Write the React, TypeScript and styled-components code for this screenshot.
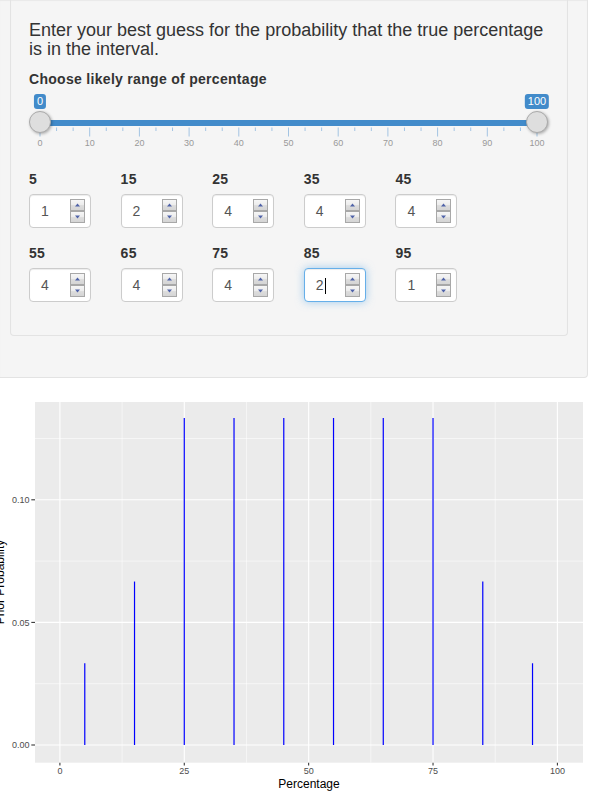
import { FC, useId } from "react";
import styled, { createGlobalStyle } from "styled-components";

const GlobalStyle = createGlobalStyle`
  html, body {
    margin: 0;
    padding: 0;
    background: #fff;
  }
  body {
    width: 596px;
    overflow: hidden;
    font-family: "Liberation Sans", Arial, Helvetica, sans-serif;
    font-size: 14px;
    line-height: 1.42857;
    color: #333;
  }
`;

const OuterWell = styled.div`
  box-sizing: border-box;
  width: 588px;
  padding: 0 19px 41px 10px;
  background: #f5f5f5;
  border-right: 1px solid #e3e3e3;
  border-bottom: 1px solid #e3e3e3;
  border-radius: 0 0 4px 0;
  box-shadow: inset 0 1px 1px rgba(0, 0, 0, 0.05);
`;

const InnerWell = styled.div`
  box-sizing: border-box;
  width: 558px;
  padding: 21px 18px 33px;
  background: #f5f5f5;
  border: 1px solid #e3e3e3;
  border-top: none;
  border-radius: 0 0 4px 4px;
  box-shadow: inset 0 1px 1px rgba(0, 0, 0, 0.05);
`;

const Title = styled.h4`
  margin: 0 0 10px;
  font-size: 18px;
  font-weight: 400;
  line-height: 19px;
  color: #333;
`;

const ControlLabel = styled.label`
  display: block;
  margin-bottom: 5px;
  font-weight: 700;
  font-size: 14px;
  line-height: 20px;
  letter-spacing: 0.3px;
`;

const SliderWrap = styled.div`
  position: relative;
  box-sizing: border-box;
  height: 75px;
  padding-top: 26px;
`;

const Bar = styled.div`
  margin: 0 11px;
  height: 6px;
  background: #428bca;
`;

const Badge = styled.span<{ $at: number }>`
  position: absolute;
  top: 0;
  left: ${(p) => p.$at}px;
  transform: translateX(-50%);
  padding: 0 3px;
  height: 15px;
  font-size: 11px;
  line-height: 15px;
  color: #fff;
  background: #428bca;
  border-radius: 3px;
`;

const Handle = styled.span<{ $at: number }>`
  position: absolute;
  top: 17px;
  left: ${(p) => p.$at - 11}px;
  box-sizing: border-box;
  width: 22px;
  height: 22px;
  border: 1px solid #ababab;
  border-radius: 50%;
  background: #dedede;
  box-shadow: 1px 1px 3px rgba(0, 0, 0, 0.3);
`;

const Scale = styled.svg`
  display: block;
`;

const InputGrid = styled.div`
  display: grid;
  grid-template-columns: repeat(5, 91.6px);
  row-gap: 15px;
`;

const Cell = styled.div`
  display: flex;
  flex-direction: column;
  align-items: flex-start;
`;

const NumberBox = styled.div<{ $focused?: boolean }>`
  box-sizing: border-box;
  display: flex;
  align-items: center;
  justify-content: space-between;
  width: 62px;
  height: 34px;
  padding: 0 5px 0 11px;
  background: #fff;
  border: 1px solid ${(p) => (p.$focused ? "#66afe9" : "#ccc")};
  border-radius: 4px;
  box-shadow: ${(p) =>
    p.$focused
      ? "inset 0 1px 1px rgba(0,0,0,.075), 0 0 8px rgba(102,175,233,.6)"
      : "inset 0 1px 1px rgba(0,0,0,.075)"};
`;

const Value = styled.span`
  display: flex;
  align-items: center;
  padding-top: 2px;
  font-size: 14px;
  color: #555;
`;

const Caret = styled.span`
  display: inline-block;
  width: 1px;
  height: 16px;
  margin-left: 1.5px;
  background: #000;
`;

const ChartSvg = styled.svg`
  display: block;
  font-family: "Liberation Sans", Arial, sans-serif;
`;

const Spinner: FC = () => {
  const id = useId();
  return (
    <svg width="15" height="24" viewBox="0 0 15 24">
      <defs>
        <linearGradient id={id} x1="0" y1="0" x2="0" y2="1">
          <stop offset="0" stopColor="#f7f7f7" />
          <stop offset="0.5" stopColor="#ececec" />
          <stop offset="0.55" stopColor="#dcdcdc" />
          <stop offset="1" stopColor="#d4d4d4" />
        </linearGradient>
      </defs>
      <rect x="0.5" y="0.5" width="14" height="11" fill={`url(#${id})`} stroke="#a8a8a8" />
      <rect x="0.5" y="12.5" width="14" height="11" fill={`url(#${id})`} stroke="#a8a8a8" />
      <path d="M5 7.5 L7.5 4.5 L10 7.5 Z" fill="#4e62a8" />
      <path d="M5 16.5 L10 16.5 L7.5 19.5 Z" fill="#4e62a8" />
    </svg>
  );
};

const entries = [
  { pct: 5, v: 1 },
  { pct: 15, v: 2 },
  { pct: 25, v: 4 },
  { pct: 35, v: 4 },
  { pct: 45, v: 4 },
  { pct: 55, v: 4 },
  { pct: 65, v: 4 },
  { pct: 75, v: 4 },
  { pct: 85, v: 2, focused: true },
  { pct: 95, v: 1 },
];

const SLIDER_FROM = 11;
const SLIDER_STEP = 49.7;

const SliderScale: FC = () => {
  const majors = Array.from({ length: 11 }, (_, i) => i);
  const minors: number[] = [];
  for (let i = 0; i < 10; i++) {
    minors.push(SLIDER_FROM + (i + 1 / 3) * SLIDER_STEP, SLIDER_FROM + (i + 2 / 3) * SLIDER_STEP);
  }
  return (
    <Scale width="520" height="26" viewBox="0 0 520 26">
      {minors.map((x) => (
        <line key={x} x1={x} x2={x} y1="1.5" y2="5" stroke="#a3c4e3" strokeWidth="1" />
      ))}
      {majors.map((i) => {
        const x = SLIDER_FROM + i * SLIDER_STEP;
        return (
          <g key={i}>
            <line x1={x} x2={x} y1="1.5" y2="10.5" stroke="#a3c4e3" strokeWidth="1" />
            <text x={x} y="19.5" textAnchor="middle" fontSize="9" fill="#999">
              {i * 10}
            </text>
          </g>
        );
      })}
    </Scale>
  );
};

// chart scales (svg starts at page y = 378)
const px = (v: number) => 59.9 + v * 4.975;
const py = (v: number) => 367 - v * 2452;

const Chart: FC = () => {
  const total = entries.reduce((s, e) => s + e.v, 0);
  const xMajor = [0, 25, 50, 75, 100];
  const xMinor = [12.5, 37.5, 62.5, 87.5];
  const yMajor = [0, 0.05, 0.1];
  const yMinor = [0.025, 0.075, 0.125];
  const left = 35;
  const right = 583;
  const top = 24;
  const bottom = 384.7;
  return (
    <ChartSvg width="596" height="419" viewBox="0 0 596 419">
      <rect x={left} y={top} width={right - left} height={bottom - top} fill="#ebebeb" />
      {yMinor.map((v) => (
        <line key={v} x1={left} x2={right} y1={py(v)} y2={py(v)} stroke="#fff" strokeWidth="0.55" />
      ))}
      {xMinor.map((v) => (
        <line key={v} x1={px(v)} x2={px(v)} y1={top} y2={bottom} stroke="#fff" strokeWidth="0.55" />
      ))}
      {yMajor.map((v) => (
        <line key={v} x1={left} x2={right} y1={py(v)} y2={py(v)} stroke="#fff" strokeWidth="1.1" />
      ))}
      {xMajor.map((v) => (
        <line key={v} x1={px(v)} x2={px(v)} y1={top} y2={bottom} stroke="#fff" strokeWidth="1.1" />
      ))}
      {entries.map((e) => (
        <line
          key={e.pct}
          x1={px(e.pct)}
          x2={px(e.pct)}
          y1={py(0)}
          y2={py(e.v / total)}
          stroke="#0000ff"
          strokeWidth="1.2"
        />
      ))}
      {yMajor.map((v) => (
        <g key={v}>
          <line x1={31.3} x2={left} y1={py(v)} y2={py(v)} stroke="#333" strokeWidth="1.07" />
          <text x="29.5" y={py(v) + 3.2} textAnchor="end" fontSize="9" fill="#4d4d4d">
            {v.toFixed(2)}
          </text>
        </g>
      ))}
      {xMajor.map((v) => (
        <g key={v}>
          <line x1={px(v)} x2={px(v)} y1={bottom} y2={bottom + 2.8} stroke="#333" strokeWidth="1.07" />
          <text x={px(v)} y="395.5" textAnchor="middle" fontSize="9" fill="#4d4d4d">
            {v}
          </text>
        </g>
      ))}
      <text x="309" y="409.6" textAnchor="middle" fontSize="12" fill="#000">
        Percentage
      </text>
      <text transform="translate(3.5 204) rotate(-90)" textAnchor="middle" fontSize="12" fill="#000">
        Prior Probability
      </text>
    </ChartSvg>
  );
};

const App: FC = () => {
  return (
    <>
      <GlobalStyle />
      <OuterWell>
        <InnerWell>
          <Title>Enter your best guess for the probability that the true percentage is in the interval.</Title>
          <ControlLabel>Choose likely range of percentage</ControlLabel>
          <SliderWrap>
            <Bar />
            <SliderScale />
            <Badge $at={11}>0</Badge>
            <Badge $at={508}>100</Badge>
            <Handle $at={11} />
            <Handle $at={508} />
          </SliderWrap>
          <InputGrid>
            {entries.map((e) => (
              <Cell key={e.pct}>
                <ControlLabel>{e.pct}</ControlLabel>
                <NumberBox $focused={e.focused}>
                  <Value>
                    {e.v}
                    {e.focused && <Caret />}
                  </Value>
                  <Spinner />
                </NumberBox>
              </Cell>
            ))}
          </InputGrid>
        </InnerWell>
      </OuterWell>
      <Chart />
    </>
  );
};

export default App;
